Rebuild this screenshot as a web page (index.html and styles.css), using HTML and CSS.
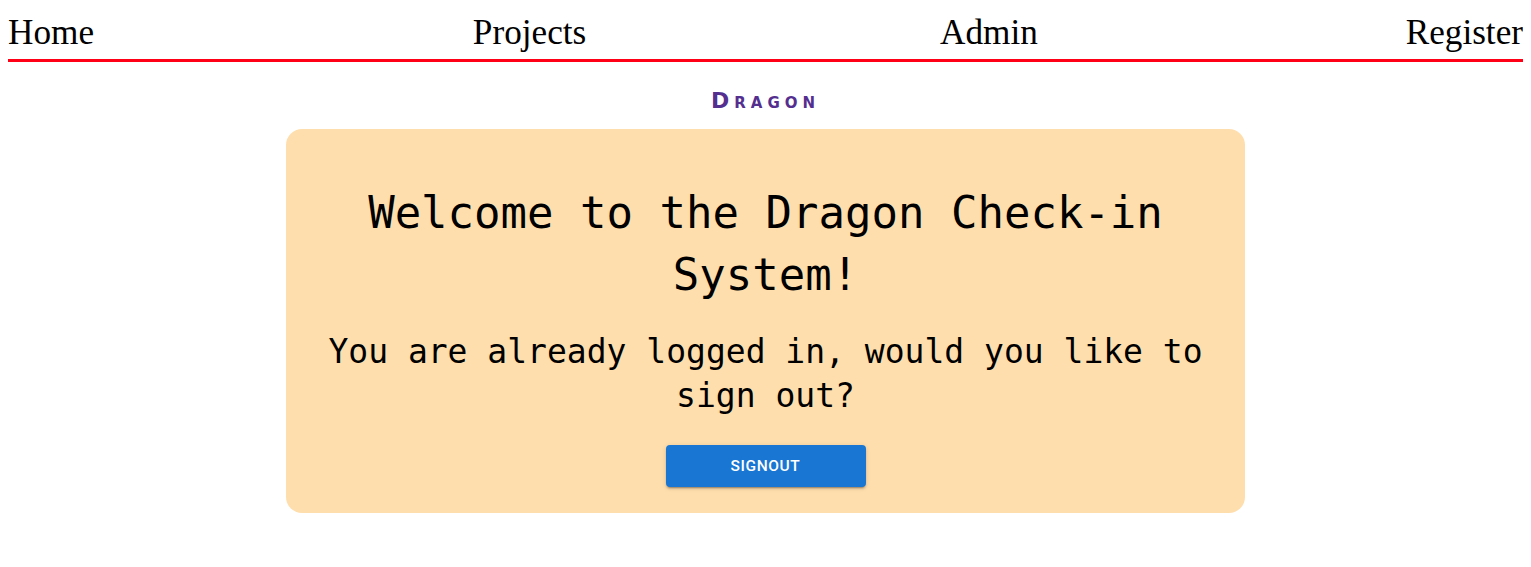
FILE: index.html
```html
<!DOCTYPE html>
<html lang="en">
<head>
<meta charset="utf-8">
<title>Dragon Check-in</title>
<link rel="stylesheet" href="styles.css">
</head>
<body>
  <nav class="topnav">
    <a class="nav-link" href="#">Home</a>
    <a class="nav-link nav-link-projects" href="#">Projects</a>
    <a class="nav-link" href="#">Admin</a>
    <a class="nav-link nav-link-register" href="#">Register</a>
  </nav>
  <main class="page">
    <div class="brand">Dragon</div>
    <section class="card">
      <h1 class="card-title">Welcome to the Dragon Check-in System!</h1>
      <p class="card-text">You are already logged in, would you like to sign out?</p>
      <button class="btn-signout" type="button">Signout</button>
    </section>
  </main>
</body>
</html>
```
FILE: styles.css
```css
body {
  margin: 8px;
  font-family: "Liberation Serif", "Times New Roman", serif;
  background: #ffffff;
  color: #000000;
}

.topnav {
  display: flex;
  justify-content: space-between;
  align-items: baseline;
  padding: 5px 0 6px;
  border-bottom: 3px solid #ff0016;
}

.nav-link {
  font-size: 35.2px;
  line-height: 40px;
  color: #000000;
  text-decoration: none;
}

.nav-link-projects {
  margin-left: 25px;
}

.nav-link-register {
  margin-left: 14px;
}

.page {
  display: flex;
  flex-direction: column;
  align-items: center;
}

.brand {
  margin-top: 27px;
  font-family: "DejaVu Sans", sans-serif;
  font-weight: bold;
  font-variant: small-caps;
  font-size: 22px;
  line-height: 24px;
  letter-spacing: 5px;
  color: #552f8f;
}

.card {
  width: 959px;
  box-sizing: border-box;
  margin-top: 16px;
  padding: 0 16px 26px;
  background: #ffdead;
  border-radius: 16px;
  display: flex;
  flex-direction: column;
  align-items: center;
  text-align: center;
  font-family: "DejaVu Sans Mono", "Liberation Mono", monospace;
}

.card-title {
  margin: 53px 0 0;
  font-size: 44px;
  line-height: 62px;
  font-weight: normal;
}

.card-text {
  margin: 24px 0 0;
  font-size: 33px;
  line-height: 44px;
}

.btn-signout {
  margin-top: 27px;
  width: 200px;
  height: 42px;
  border: none;
  border-radius: 4px;
  background: #1976d2;
  color: #ffffff;
  font-family: Roboto, "Liberation Sans", sans-serif;
  font-weight: 500;
  font-size: 15.5px;
  letter-spacing: 0.6px;
  text-transform: uppercase;
  box-shadow: 0 3px 1px -2px rgba(0,0,0,0.2), 0 2px 2px 0 rgba(0,0,0,0.14), 0 1px 5px 0 rgba(0,0,0,0.12);
  cursor: pointer;
}
```
